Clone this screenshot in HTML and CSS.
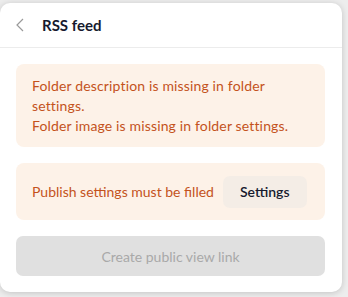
FILE: index.html
```html
<!DOCTYPE html>
<html>
<head>
<meta charset="utf-8">
<link rel="stylesheet" href="styles.css">
</head>
<body>
<div class="card">
  <div class="header">
    <svg class="back" width="8" height="14" viewBox="0 0 8 14"><path d="M7 1 L1 7 L7 13" fill="none" stroke="#9a9a9a" stroke-width="1.2"/></svg>
    <span class="title">RSS feed</span>
  </div>
  <div class="body">
    <div class="alert">
      <div>Folder description is missing in folder settings.</div>
      <div>Folder image is missing in folder settings.</div>
    </div>
    <div class="alert alert-row">
      <span>Publish settings must be filled</span>
      <button class="settings">Settings</button>
    </div>
    <button class="create" disabled>Create public view link</button>
  </div>
</div>
</body>
</html>
```
FILE: styles.css
```css
html, body { margin: 0; padding: 0; }
body {
  background: #ededed;
  font-family: Lato, "Noto Sans", sans-serif;
  width: 348px;
  height: 297px;
  overflow: hidden;
}
.card {
  margin-top: 3px;
  width: 342px;
  height: 289px;
  background: #fff;
  border-radius: 10px;
  box-shadow: 0 1px 6px rgba(0,0,0,0.18);
  box-sizing: border-box;
}
.header {
  height: 44px;
  border-bottom: 1px solid #ececec;
  display: flex;
  align-items: center;
  padding-left: 16px;
}
.back { margin-right: 18px; }
.title {
  font-size: 15px;
  font-weight: 700;
  color: #161a2e;
}
.body {
  padding: 16px 17px 0 16px;
  display: flex;
  flex-direction: column;
  gap: 16px;
}
.alert {
  background: #fdf2e8;
  border-radius: 8px;
  color: #c4521c;
  font-size: 14px;
  letter-spacing: 0.15px;
  line-height: 20px;
  padding: 11.5px 16px;
}
.alert-row {
  display: flex;
  align-items: center;
  padding: 12.5px 16px;
  gap: 9px;
  letter-spacing: 0;
}
.settings {
  font-family: inherit;
  font-size: 14px;
  font-weight: 600;
  color: #161a2e;
  background: #f4ede6;
  border: none;
  border-radius: 7px;
  height: 32px;
  padding: 0 17px;
}
.create {
  font-family: inherit;
  font-size: 14px;
  color: #a9a9a9;
  background: #e0e0e0;
  border: none;
  border-radius: 7px;
  height: 40px;
  width: 100%;
}
```
